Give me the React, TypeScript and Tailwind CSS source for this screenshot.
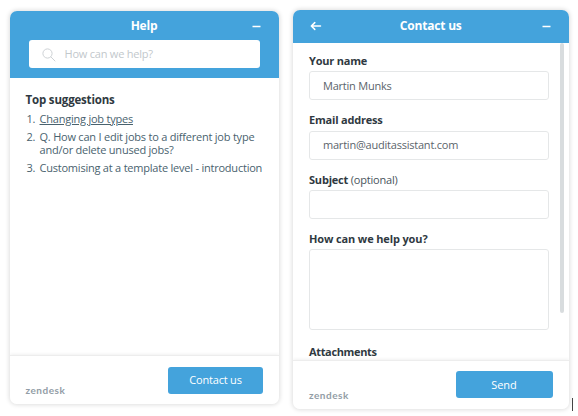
import type { ReactNode } from "react";

interface PanelProps {
  title: string;
  className: string;
  headerClassName: string;
  back?: boolean;
  search?: ReactNode;
  children: ReactNode;
  footer: ReactNode;
}

function Panel({ title, className, headerClassName, back, search, children, footer }: PanelProps) {
  return (
    <section
      className={`flex flex-col overflow-hidden rounded-[7px] bg-white shadow-[0_0_4px_1px_rgba(0,0,0,0.13)] ${className}`}
    >
      <header className={`shrink-0 bg-[#44a3dc] text-white ${headerClassName}`}>
        <div className="grid grid-cols-[46px_1fr_46px] items-center">
          <span className="pl-[17px]">
            {back && (
              <svg width="12" height="10" viewBox="0 0 12 10" fill="none" stroke="currentColor" strokeWidth="1.5">
                <path d="M10.5 5H1.5M4.8 1.6L1.3 5L4.8 8.4" strokeLinecap="round" strokeLinejoin="round" />
              </svg>
            )}
          </span>
          <h1 className="text-center text-[12px] leading-4 font-bold tracking-[-0.2px]">{title}</h1>
          <span className="flex justify-end pr-[18px]">
            <svg width="9" height="3" viewBox="0 0 9 3" stroke="currentColor">
              <path d="M0.5 1.5H8.5" strokeWidth="1.4" />
            </svg>
          </span>
        </div>
        {search}
      </header>
      {children}
      {footer}
    </section>
  );
}

interface FooterProps {
  label: string;
  className: string;
  buttonClassName: string;
}

function Footer({ label, className, buttonClassName }: FooterProps) {
  return (
    <footer
      className={`relative flex shrink-0 items-start justify-between border-t border-[#ededed] bg-white pl-4 shadow-[0_-1px_3px_rgba(0,0,0,0.06)] ${className}`}
    >
      <span className="mt-[27px] font-[Lato] text-[10px] leading-[14px] font-bold tracking-[0.5px] text-[#929da6]">
        zendesk
      </span>
      <button
        className={`rounded-[3px] bg-[#44a3dc] text-[11px] font-medium text-white ${buttonClassName}`}
      >
        {label}
      </button>
    </footer>
  );
}

interface FieldProps {
  label: string;
  optional?: boolean;
  value?: string;
}

function Field({ label, optional, value }: FieldProps) {
  return (
    <div className="mb-3">
      <label className="block h-[18.2px] text-[11px] leading-[15px] font-bold tracking-[-0.2px] text-[#2f3941]">
        {label}
        {optional && <span className="font-normal text-[#49545c]"> (optional)</span>}
      </label>
      <div className="flex h-[29.2px] items-center rounded-[3px] border border-[#e5e7e8] pt-px pl-[13px] text-[11px] tracking-[-0.22px] text-[#5b646b]">
        {value}
      </div>
    </div>
  );
}

export default function App() {
  return (
    <main className="relative flex h-[416px] w-[578px] items-start overflow-hidden bg-white font-['Open_Sans',sans-serif]">
      <Panel
        title="Help"
        className="mt-[11px] ml-[9.5px] h-[393px] w-[269px] shrink-0"
        headerClassName="h-[67px] pt-[7px]"
        search={
          <div className="mt-1.5 mr-[19px] ml-[19px] flex h-7 items-center rounded-[3px] bg-white pt-px pl-[13px] text-[11px] tracking-[-0.22px] text-[#c2c8cc]">
            <svg width="14" height="14" viewBox="0 0 14 14" fill="none" stroke="#cdd1d4" strokeWidth="1">
              <circle cx="5.5" cy="5.5" r="4.6" />
              <path d="M9 9l4 4" strokeLinecap="round" />
            </svg>
            <span className="ml-[9px]">How can we help?</span>
          </div>
        }
        footer={
          <Footer
            label="Contact us"
            className="h-[49px]"
            buttonClassName="mt-[11px] mr-[15.5px] h-[27px] w-[95px] tracking-[-0.2px]"
          />
        }
      >
        <div className="flex-1 pt-[13.5px] pr-2 pl-4 text-[11px] tracking-[-0.22px] text-[#49626e]">
          <h2 className="text-[11.5px] leading-4 font-bold tracking-[-0.17px] text-[#2f3941]">Top suggestions</h2>
          <ol className="mt-[4.5px] space-y-[5px] leading-[13px]">
            <li className="grid grid-cols-[14px_1fr]">
              <span className="pl-px">1.</span>
              <a className="underline">Changing job types</a>
            </li>
            <li className="grid grid-cols-[14px_1fr]">
              <span className="pl-px">2.</span>
              <span className="whitespace-nowrap">
                Q. How can I edit jobs to a different job type
                <br />
                and/or delete unused jobs?
              </span>
            </li>
            <li className="grid grid-cols-[14px_1fr]">
              <span className="pl-px">3.</span>
              <span className="whitespace-nowrap">Customising at a template level - introduction</span>
            </li>
          </ol>
        </div>
      </Panel>

      <Panel
        title="Contact us"
        back
        className="mt-[10px] ml-[14.5px] h-[399px] w-[275.5px] shrink-0"
        headerClassName="h-[33px] pt-2"
        footer={
          <Footer
            label="Send"
            className="h-[49px]"
            buttonClassName="mt-[10.4px] mr-4 h-[27px] w-[97px] pt-px"
          />
        }
      >
        <div className="flex min-h-0 flex-1 justify-between">
          <form className="w-[256px] pt-[10px] pl-4">
            <Field label="Your name" value="Martin Munks" />
            <Field label="Email address" value="martin@auditassistant.com" />
            <Field label="Subject" optional />
            <label className="block h-[18.2px] text-[11px] leading-[15px] font-bold tracking-[-0.13px] text-[#2f3941]">
              How can we help you?
            </label>
            <div className="h-[80.5px] rounded-[3px] border border-[#e5e7e8]" />
            <p className="mt-[14px] text-[11px] leading-4 font-bold tracking-[-0.35px] text-[#2f3941]">Attachments</p>
          </form>
          <div className="mr-[5px] h-[270px] w-1 rounded-full bg-[#d8dcde]" />
        </div>
      </Panel>

      <span className="absolute top-[398px] left-[572px] h-[13px] w-px bg-[#444]" />
    </main>
  );
}
